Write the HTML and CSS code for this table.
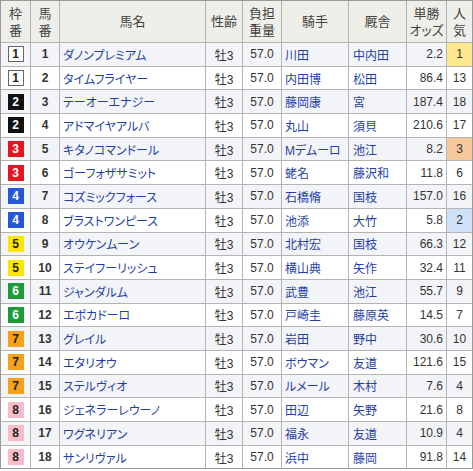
FILE: index.html
```html
<!DOCTYPE html>
<html lang="ja">
<head>
<meta charset="utf-8">
<link rel="stylesheet" href="styles.css">
</head>
<body>
<div class="tbl">
  <div class="row head">
    <div class="c">枠<br>番</div>
    <div class="c">馬<br>番</div>
    <div class="c">馬名</div>
    <div class="c">性齢</div>
    <div class="c">負担<br>重量</div>
    <div class="c">騎手</div>
    <div class="c">厩舎</div>
    <div class="c">単勝<br>オッズ</div>
    <div class="c">人<br>気</div>
  </div>
  <div class="row odd"><div class="c"><span class="w w1">1</span></div><div class="c num">1</div><div class="c name">ダノンプレミアム</div><div class="c sx">牡3</div><div class="c wt">57.0</div><div class="c lk">川田</div><div class="c lk tr">中内田</div><div class="c od">2.2</div><div class="c pp p1">1</div></div>
  <div class="row"><div class="c"><span class="w w1">1</span></div><div class="c num">2</div><div class="c name">タイムフライヤー</div><div class="c sx">牡3</div><div class="c wt">57.0</div><div class="c lk">内田博</div><div class="c lk tr">松田</div><div class="c od">86.4</div><div class="c pp">13</div></div>
  <div class="row odd"><div class="c"><span class="w w2">2</span></div><div class="c num">3</div><div class="c name">テーオーエナジー</div><div class="c sx">牡3</div><div class="c wt">57.0</div><div class="c lk">藤岡康</div><div class="c lk tr">宮</div><div class="c od">187.4</div><div class="c pp">18</div></div>
  <div class="row"><div class="c"><span class="w w2">2</span></div><div class="c num">4</div><div class="c name">アドマイヤアルバ</div><div class="c sx">牡3</div><div class="c wt">57.0</div><div class="c lk">丸山</div><div class="c lk tr">須貝</div><div class="c od">210.6</div><div class="c pp">17</div></div>
  <div class="row odd"><div class="c"><span class="w w3">3</span></div><div class="c num">5</div><div class="c name">キタノコマンドール</div><div class="c sx">牡3</div><div class="c wt">57.0</div><div class="c lk">Mデムーロ</div><div class="c lk tr">池江</div><div class="c od">8.2</div><div class="c pp p3">3</div></div>
  <div class="row"><div class="c"><span class="w w3">3</span></div><div class="c num">6</div><div class="c name">ゴーフォザサミット</div><div class="c sx">牡3</div><div class="c wt">57.0</div><div class="c lk">蛯名</div><div class="c lk tr">藤沢和</div><div class="c od">11.8</div><div class="c pp">6</div></div>
  <div class="row odd"><div class="c"><span class="w w4">4</span></div><div class="c num">7</div><div class="c name">コズミックフォース</div><div class="c sx">牡3</div><div class="c wt">57.0</div><div class="c lk">石橋脩</div><div class="c lk tr">国枝</div><div class="c od">157.0</div><div class="c pp">16</div></div>
  <div class="row"><div class="c"><span class="w w4">4</span></div><div class="c num">8</div><div class="c name">ブラストワンピース</div><div class="c sx">牡3</div><div class="c wt">57.0</div><div class="c lk">池添</div><div class="c lk tr">大竹</div><div class="c od">5.8</div><div class="c pp p2">2</div></div>
  <div class="row odd"><div class="c"><span class="w w5">5</span></div><div class="c num">9</div><div class="c name">オウケンムーン</div><div class="c sx">牡3</div><div class="c wt">57.0</div><div class="c lk">北村宏</div><div class="c lk tr">国枝</div><div class="c od">66.3</div><div class="c pp">12</div></div>
  <div class="row"><div class="c"><span class="w w5">5</span></div><div class="c num">10</div><div class="c name">ステイフーリッシュ</div><div class="c sx">牡3</div><div class="c wt">57.0</div><div class="c lk">横山典</div><div class="c lk tr">矢作</div><div class="c od">32.4</div><div class="c pp">11</div></div>
  <div class="row odd"><div class="c"><span class="w w6">6</span></div><div class="c num">11</div><div class="c name">ジャンダルム</div><div class="c sx">牡3</div><div class="c wt">57.0</div><div class="c lk">武豊</div><div class="c lk tr">池江</div><div class="c od">55.7</div><div class="c pp">9</div></div>
  <div class="row"><div class="c"><span class="w w6">6</span></div><div class="c num">12</div><div class="c name">エポカドーロ</div><div class="c sx">牡3</div><div class="c wt">57.0</div><div class="c lk">戸崎圭</div><div class="c lk tr">藤原英</div><div class="c od">14.5</div><div class="c pp">7</div></div>
  <div class="row odd"><div class="c"><span class="w w7">7</span></div><div class="c num">13</div><div class="c name">グレイル</div><div class="c sx">牡3</div><div class="c wt">57.0</div><div class="c lk">岩田</div><div class="c lk tr">野中</div><div class="c od">30.6</div><div class="c pp">10</div></div>
  <div class="row"><div class="c"><span class="w w7">7</span></div><div class="c num">14</div><div class="c name">エタリオウ</div><div class="c sx">牡3</div><div class="c wt">57.0</div><div class="c lk">ボウマン</div><div class="c lk tr">友道</div><div class="c od">121.6</div><div class="c pp">15</div></div>
  <div class="row odd"><div class="c"><span class="w w7">7</span></div><div class="c num">15</div><div class="c name">ステルヴィオ</div><div class="c sx">牡3</div><div class="c wt">57.0</div><div class="c lk">ルメール</div><div class="c lk tr">木村</div><div class="c od">7.6</div><div class="c pp">4</div></div>
  <div class="row"><div class="c"><span class="w w8">8</span></div><div class="c num">16</div><div class="c name">ジェネラーレウーノ</div><div class="c sx">牡3</div><div class="c wt">57.0</div><div class="c lk">田辺</div><div class="c lk tr">矢野</div><div class="c od">21.6</div><div class="c pp">8</div></div>
  <div class="row odd"><div class="c"><span class="w w8">8</span></div><div class="c num">17</div><div class="c name">ワグネリアン</div><div class="c sx">牡3</div><div class="c wt">57.0</div><div class="c lk">福永</div><div class="c lk tr">友道</div><div class="c od">10.9</div><div class="c pp">4</div></div>
  <div class="row"><div class="c"><span class="w w8">8</span></div><div class="c num">18</div><div class="c name">サンリヴァル</div><div class="c sx">牡3</div><div class="c wt">57.0</div><div class="c lk">浜中</div><div class="c lk tr">藤岡</div><div class="c od">91.8</div><div class="c pp">14</div></div>
</div>
</body>
</html>
```
FILE: styles.css
```css
html, body {
  margin: 0;
  padding: 0;
  background: #ffffff;
}
body {
  font-family: "Liberation Sans", "Noto Sans CJK JP", sans-serif;
  font-size: 12px;
  color: #333333;
}
.tbl {
  width: 473px;
  box-sizing: border-box;
  border: 1px solid #9a9a9a;
  background: #b4b4b4;
  display: grid;
  gap: 1px;
}
.row {
  --bg: #ffffff;
  display: grid;
  grid-template-columns: 29px 28px 145px 36px 38px 66px 57px 39px 25px;
  gap: 1px;
  height: 22.7px;
}
.row.odd {
  --bg: #f3f4f8;
}
.row.head {
  --bg: #efefe9;
  height: 41px;
}
.c {
  background: var(--bg);
  display: flex;
  align-items: center;
  justify-content: center;
  white-space: nowrap;
  overflow: hidden;
  font-feature-settings: "palt";
}
.head .c {
  text-align: center;
  font-size: 13px;
  line-height: 17px;
  color: #444444;
}
.num {
  font-weight: bold;
  font-size: 12px;
  color: #333333;
}
.name, .lk {
  justify-content: flex-start;
  padding-left: 3px;
  color: #1f3fa6;
  font-size: 12px;
}
.tr {
  padding-left: 4px;
}
.od {
  justify-content: flex-end;
  padding-right: 3px;
}
.wt, .sx, .od, .pp {
  color: #333333;
}
.p1 { background: #fde88d; }
.p2 { background: #cfe1f8; }
.p3 { background: #f6c89c; }
.w {
  width: 16px;
  height: 16px;
  box-sizing: border-box;
  display: flex;
  align-items: center;
  justify-content: center;
  font-weight: bold;
  font-size: 12px;
}
.w1 { background: #ffffff; border: 1px solid #666666; color: #222222; }
.w2 { background: #111111; color: #ffffff; }
.w3 { background: #e8141e; color: #ffffff; }
.w4 { background: #2458d8; color: #ffffff; }
.w5 { background: #fde700; color: #222222; }
.w6 { background: #1d9a3c; color: #ffffff; }
.w7 { background: #f6a01c; color: #222222; }
.w8 { background: #f8bcc8; color: #222222; }
```
